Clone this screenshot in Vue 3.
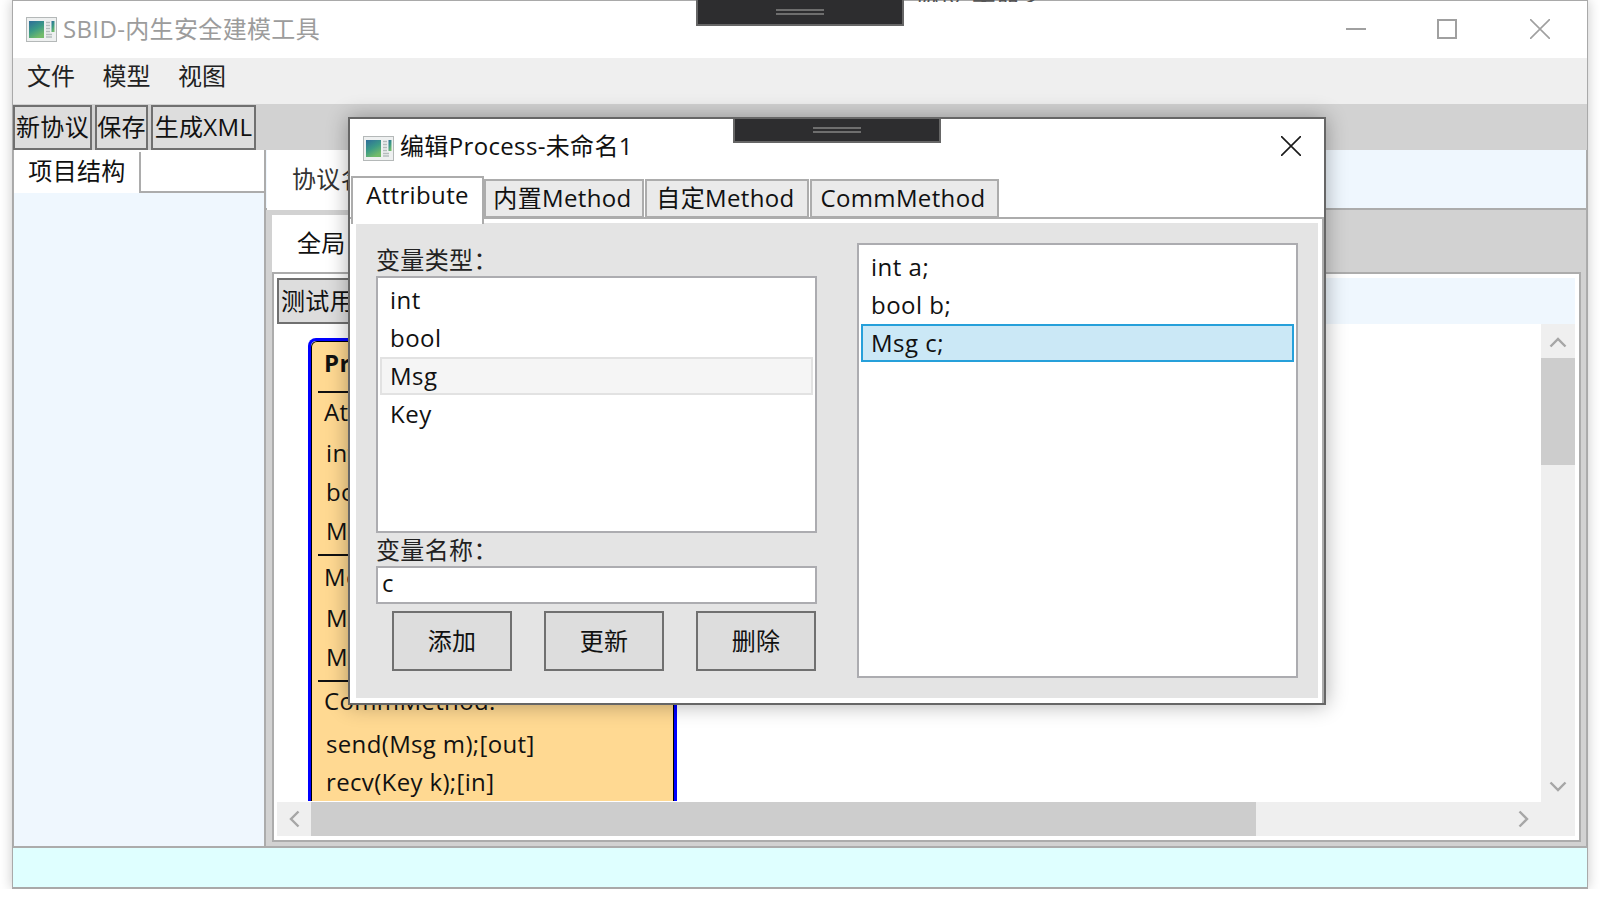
<script setup>
const menus = ['文件', '模型', '视图']
const tools = ['新协议', '保存', '生成XML']
const types = ['int', 'bool', 'Msg', 'Key']
const vars = ['int a;', 'bool b;', 'Msg c;']
const dialogTabs = ['内置Method', '自定Method', 'CommMethod']
const actions = ['添加', '更新', '删除']
const nodeSections = [
  { title: 'Attribute:', rows: ['int a;', 'bool b;', 'Msg c;'] },
  { title: 'Method:', rows: ['Method1', 'Method2'] },
]
</script>

<template>
  <div class="window">
    <header class="titlebar">
      <svg class="appicon" viewBox="0 0 31 25">
        <defs>
          <linearGradient id="appgrad" x1="0" y1="0" x2="0.5" y2="1">
            <stop offset="0" stop-color="#2d6c9a" />
            <stop offset="0.55" stop-color="#3b9a86" />
            <stop offset="1" stop-color="#72bb6a" />
          </linearGradient>
        </defs>
        <rect x="0.5" y="0.5" width="30" height="24" fill="#eef0f0" stroke="#b4b8b8" />
        <rect x="3" y="4" width="15" height="17" fill="url(#appgrad)" />
        <path d="M20 5.5h4M20 8.5h4M20 11.5h4M20 14.5h4M20 17.5h6M20 20h6" stroke="#b4bcbc" stroke-width="1.3" />
        <rect x="25.5" y="4" width="3" height="11" fill="url(#appgrad)" />
      </svg>
      <span class="apptitle">SBID-内生安全建模工具</span>
      <div class="winbtns">
        <svg width="20" height="20" viewBox="0 0 20 20"><path d="M0 10h20" stroke="#a0a0a0" stroke-width="2" /></svg>
        <svg width="20" height="20" viewBox="0 0 20 20"><rect x="1" y="1" width="18" height="18" fill="none" stroke="#a0a0a0" stroke-width="2" /></svg>
        <svg width="20" height="20" viewBox="0 0 20 20"><path d="M0 0l20 20M20 0L0 20" stroke="#a0a0a0" stroke-width="1.6" /></svg>
      </div>
    </header>

    <nav class="menubar">
      <span v-for="m in menus" :key="m" class="menuitem">{{ m }}</span>
    </nav>

    <div class="toolbar">
      <button v-for="t in tools" :key="t" class="toolbtn">{{ t }}</button>
    </div>

    <div class="workspace">
      <aside class="leftpanel">
        <div class="lefttabs">
          <div class="lefttab">项目结构</div>
        </div>
        <div class="leftbody"></div>
      </aside>

      <section class="rightpanel">
        <div class="protostrip">
          <div class="prototab">协议名</div>
        </div>
        <div class="protobody">
          <div class="globaltabs">
            <div class="globaltab">全局</div>
          </div>
          <div class="canvaspane">
            <div class="canvastools">
              <button class="testbtn">测试用例</button>
            </div>
            <div class="canvasrow">
              <div class="canvas">
                <div class="node">
                  <div class="nodeinner">
                    <div class="nodehead">Process</div>
                    <div v-for="s in nodeSections" :key="s.title" class="nodesec">
                      <div class="nodetitle">{{ s.title }}</div>
                      <div v-for="r in s.rows" :key="r" class="noderow">{{ r }}</div>
                    </div>
                    <div class="nodetitle commtitle">CommMethod:</div>
                    <div class="commrow">send(Msg m);[out]</div>
                    <div class="commrow">recv(Key k);[in]</div>
                  </div>
                </div>
              </div>
              <div class="vscroll">
                <svg class="arrow arrowup" width="18" height="12" viewBox="0 0 18 12"><path d="M1.5 10.5L9 3l7.5 7.5" fill="none" stroke="#a6a6a6" stroke-width="2.4" /></svg>
                <div class="vthumb"></div>
                <div class="vtrack"></div>
                <svg class="arrow arrowdown" width="18" height="12" viewBox="0 0 18 12"><path d="M1.5 1.5L9 9l7.5-7.5" fill="none" stroke="#a6a6a6" stroke-width="2.4" /></svg>
              </div>
            </div>
            <div class="hscroll">
              <div class="hbtn">
                <svg width="12" height="18" viewBox="0 0 12 18"><path d="M10.5 1.5L3 9l7.5 7.5" fill="none" stroke="#a6a6a6" stroke-width="2.4" /></svg>
              </div>
              <div class="hthumb"></div>
              <div class="htrack"></div>
              <div class="hbtn">
                <svg width="12" height="18" viewBox="0 0 12 18"><path d="M1.5 1.5L9 9l-7.5 7.5" fill="none" stroke="#a6a6a6" stroke-width="2.4" /></svg>
              </div>
              <div class="hcorner"></div>
            </div>
          </div>
        </div>
      </section>
    </div>

    <footer class="statusbar"></footer>
  </div>

  <div class="handle tophandle"><i></i><i></i></div>
  <div class="peektext">协议-未命名</div>

  <div class="dialog">
    <div class="handle dlghandle"><i></i><i></i></div>
    <header class="dlgtitle">
      <svg class="appicon dlgicon" viewBox="0 0 31 25">
        <rect x="0.5" y="0.5" width="30" height="24" fill="#eef0f0" stroke="#b4b8b8" />
        <rect x="3" y="4" width="15" height="17" fill="url(#appgrad)" />
        <path d="M20 5.5h4M20 8.5h4M20 11.5h4M20 14.5h4M20 17.5h6M20 20h6" stroke="#b4bcbc" stroke-width="1.3" />
        <rect x="25.5" y="4" width="3" height="11" fill="url(#appgrad)" />
      </svg>
      <span class="dlgname">编辑Process-未命名1</span>
      <svg class="dlgclose" width="20" height="20" viewBox="0 0 20 20"><path d="M0 0l20 20M20 0L0 20" stroke="#1a1a1a" stroke-width="1.6" /></svg>
    </header>
    <div class="dlgtabs">
      <div class="dlgtab active">Attribute</div>
      <div v-for="t in dialogTabs" :key="t" class="dlgtab">{{ t }}</div>
    </div>
    <div class="dlgpane">
      <div class="dlgcontent">
        <div class="formcol">
          <label class="flabel firstlabel">变量类型：</label>
          <ul class="typelist">
            <li v-for="t in types" :key="t" class="row" :class="{ hover: t === 'Msg' }">{{ t }}</li>
          </ul>
          <label class="flabel">变量名称：</label>
          <div class="input">c</div>
          <div class="actions">
            <button v-for="a in actions" :key="a" class="actionbtn">{{ a }}</button>
          </div>
        </div>
        <ul class="varlist">
          <li v-for="v in vars" :key="v" class="row" :class="{ selected: v === 'Msg c;' }">{{ v }}</li>
        </ul>
      </div>
    </div>
  </div>
</template>

<style>
html, body { margin: 0; background: #fff; overflow: hidden; }
</style>

<style scoped>
.window, .dialog, .peektext {
  font-family: "Open Sans", "Noto Sans CJK SC", sans-serif;
  font-size: 24px;
  letter-spacing: 0.35px;
  color: #111;
}
.window {
  box-sizing: border-box;
  position: relative;
  margin-left: 12px;
  width: 1576px;
  height: 889px;
  border: 1px solid #a9a9a9;
  border-bottom-width: 2px;
  background: #fff;
  box-shadow: 0 0 12px rgba(0, 0, 0, 0.22);
  display: flex;
  flex-direction: column;
}
.titlebar {
  height: 57px;
  flex: none;
  display: flex;
  align-items: center;
  padding-left: 13px;
  background: #fff;
  position: relative;
}
.appicon { width: 31px; height: 25px; flex: none; margin-top: -1px; }
.apptitle { margin-left: 6px; color: #9c9c9c; line-height: 1; margin-top: -1px; }
.winbtns {
  position: absolute;
  left: 1333px;
  top: 18px;
  display: flex;
  gap: 71px;
}
.winbtns svg:nth-child(2) { margin-right: 2px; }
.menubar {
  box-sizing: border-box;
  height: 46px;
  flex: none;
  background: #efefef;
  display: flex;
  align-items: center;
  padding: 0 0 10px 14px;
  gap: 27.5px;
  letter-spacing: 0;
}
.menuitem { line-height: 1; color: #222; }
.toolbar {
  height: 46px;
  flex: none;
  background: #d2d2d2;
  display: flex;
  gap: 3px;
  padding-top: 1px;
  box-sizing: border-box;
}
.toolbtn, .testbtn {
  box-sizing: border-box;
  height: 45px;
  padding: 0 0 4px;
  margin: 0;
  border: 2px solid #707070;
  background: #ddd;
  font: inherit;
  letter-spacing: inherit;
  color: #111;
  white-space: nowrap;
}
.toolbtn { width: 79px; }
.toolbtn:nth-child(2) { width: 53px; }
.toolbtn:nth-child(3) { width: 105px; }
.testbtn { height: 46px; padding: 0 2px 4px; }
.workspace {
  flex: 1;
  display: flex;
  min-height: 0;
  background: #acacac;
  padding: 0 1px 2px;
}
.leftpanel {
  box-sizing: border-box;
  width: 252px;
  flex: none;
  display: flex;
  flex-direction: column;
  border-right: 2px solid #acacac;
}
.lefttabs {
  height: 43px;
  flex: none;
  background: #fff;
  box-sizing: border-box;
  border-bottom: 2px solid #acacac;
  padding-top: 2px;
}
.lefttab {
  box-sizing: content-box;
  width: 124px;
  height: 41px;
  padding-left: 1px;
  background: #fff;
  border-right: 2px solid #acacac;
  text-align: center;
  line-height: 38px;
}
.leftbody { flex: 1; background: #eff7fe; }
.rightpanel {
  flex: 1;
  min-width: 0;
  display: flex;
  flex-direction: column;
  background: #d2d2d2;
}
.protostrip {
  height: 58px;
  flex: none;
  background: #eff7fe;
  border-bottom: 2px solid #acacac;
  position: relative;
}
.prototab {
  width: 200px;
  height: 60px;
  background: #fff;
  margin-left: 1px;
  padding-left: 25px;
  line-height: 58px;
  box-sizing: border-box;
  color: #333;
}
.protobody {
  flex: 1;
  min-height: 0;
  display: flex;
  flex-direction: column;
  padding: 5px 5px 4px 6px;
}
.globaltabs { height: 57px; flex: none; }
.globaltab {
  width: 200px;
  height: 60px;
  background: #fff;
  padding-left: 25px;
  line-height: 56px;
  box-sizing: border-box;
}
.canvaspane {
  flex: 1;
  min-height: 0;
  box-sizing: border-box;
  border: 2px solid #acacac;
  background: #fff;
  padding: 4px 4px 4px 3px;
  display: flex;
  flex-direction: column;
  position: relative;
}
.canvastools {
  height: 46px;
  flex: none;
  background: #eff7fe;
  display: flex;
}
.canvasrow { flex: 1; min-height: 0; display: flex; }
.canvas { flex: 1; min-width: 0; overflow: hidden; background: #fff; position: relative; }
.node {
  box-sizing: border-box;
  margin: 14px 0 0 31px;
  width: 369px;
  border: 3px solid #0000ff;
  border-radius: 8px 8px 0 0;
  border-bottom: 0;
}
.nodeinner {
  box-sizing: border-box;
  border: 1px solid #000;
  border-bottom: 0;
  border-radius: 6px 6px 0 0;
  background: #ffd992;
  padding: 2px 0 0 6px;
  line-height: 38px;
}
.nodehead { font-weight: 700; height: 38px; padding-left: 6px; margin-bottom: 9px; }
.nodesec { border-top: 2px solid #111; padding-bottom: 3px; }
.nodetitle { height: 38px; margin-bottom: 3px; padding-left: 6px; }
.nodesec + .nodesec .nodetitle { margin-top: 2px; }
.noderow { height: 39px; padding-left: 8px; }
.commtitle { border-top: 2px solid #111; height: 40px; margin-bottom: 3px; }
.commrow { height: 38px; padding-left: 8px; }
.vscroll {
  width: 34px;
  flex: none;
  background: #efefef;
  display: flex;
  flex-direction: column;
  align-items: center;
}
.arrow { flex: none; }
.arrowup { margin: 12px 0 10px; }
.arrowdown { margin: 13px 0 9px; }
.vthumb { width: 100%; height: 107px; background: #cdcdcd; flex: none; }
.vtrack { flex: 1; }
.hscroll {
  height: 34px;
  flex: none;
  display: flex;
  background: #efefef;
}
.hbtn {
  width: 34px;
  flex: none;
  display: flex;
  align-items: center;
  justify-content: center;
}
.hthumb { width: 945px; flex: none; background: #cdcdcd; }
.htrack { flex: 1; }
.hcorner { width: 34px; flex: none; }
.statusbar {
  height: 39px;
  flex: none;
  background: #dfffff;
}

.handle {
  position: absolute;
  box-sizing: border-box;
  width: 208px;
  border: 2px solid #666;
  border-top: 0;
  background: #2d2d2f;
  display: flex;
  flex-direction: column;
  align-items: center;
  justify-content: center;
  gap: 2px;
  z-index: 3;
}
.handle i {
  display: block;
  width: 48px;
  height: 2px;
  background: #6e6e6e;
}
.tophandle { left: 696px; top: 0; height: 26px; }
.dlghandle { left: 383px; top: 0; height: 24px; }
.peektext {
  position: absolute;
  left: 915px;
  top: 0;
  height: 2px;
  overflow: hidden;
  color: #555;
  line-height: 2px;
  white-space: nowrap;
}

.dialog {
  position: absolute;
  box-sizing: border-box;
  left: 348px;
  top: 117px;
  width: 978px;
  height: 588px;
  border: 2px solid #666;
  background: #fff;
  box-shadow: 0 0 20px rgba(0, 0, 0, 0.32);
  z-index: 2;
  display: flex;
  flex-direction: column;
}
.dlgtitle {
  height: 58px;
  flex: none;
  display: flex;
  align-items: center;
  padding-left: 13px;
  position: relative;
}
.dlgicon { margin-top: 0; }
.dlgname { margin-left: 6px; line-height: 1; margin-top: -4px; }
.dlgclose { position: absolute; left: 931px; top: 17px; }
.dlgtabs {
  height: 42px;
  flex: none;
  display: flex;
  align-items: flex-end;
  gap: 1px;
  padding-left: 1px;
  position: relative;
  z-index: 1;
}
.dlgtab {
  box-sizing: border-box;
  height: 39px;
  border: 2px solid #acacac;
  background: #eaeaea;
  line-height: 34px;
  text-align: center;
  margin-bottom: 1px;
  padding-right: 3px;
  width: 160px;
}
.dlgtab:nth-child(3) { width: 164px; }
.dlgtab:last-child { width: 189px; }
.dlgtab.active {
  width: 133px;
  height: 48px;
  padding-right: 0;
  background: #fff;
  border-bottom: 0;
  border-right: 2px solid #acacac;
  line-height: 34px;
  margin-bottom: -5px;
  margin-right: -1px;
  position: relative;
  z-index: 1;
}
.dlgpane {
  flex: 1;
  min-height: 0;
  box-sizing: border-box;
  border-top: 2px solid #acacac;
  border-right: 2px solid #acacac;
  padding: 4px 4px 5px 6px;
  background: #fff;
  margin-top: -2px;
}
.dlgcontent {
  height: 100%;
  box-sizing: border-box;
  background: #e4e4e4;
  padding: 20px 20px 20px;
  display: flex;
  justify-content: space-between;
  align-items: stretch;
}
.formcol { width: 441px; flex: none; display: flex; flex-direction: column; }
.flabel { display: block; height: 33px; line-height: 34px; color: #222; flex: none; }
.firstlabel { height: 33px; line-height: 34px; }
ul { list-style: none; margin: 0; }
.typelist {
  box-sizing: border-box;
  height: 257px;
  flex: none;
  border: 2px solid #acacb0;
  background: #fff;
  padding: 3px 2px 2px;
}
.varlist {
  box-sizing: border-box;
  width: 441px;
  flex: none;
  border: 2px solid #acacb0;
  background: #fff;
  padding: 3px 2px;
}
.row {
  box-sizing: border-box;
  height: 38px;
  line-height: 34px;
  padding-left: 8px;
  border: 2px solid transparent;
  letter-spacing: 0.5px;
}
.row.hover { background: #f5f5f5; border-color: #e2e2e2; }
.row.selected { background: #cbe8f6; border-color: #26a0da; }
.input {
  box-sizing: border-box;
  height: 38px;
  flex: none;
  border: 2px solid #acacb0;
  background: #fff;
  padding-left: 4px;
  line-height: 30px;
}
.actions {
  display: flex;
  gap: 32px;
  margin: 7px 0 0 16px;
}
.actionbtn {
  box-sizing: border-box;
  width: 120px;
  height: 60px;
  margin: 0;
  padding: 0 0 4px;
  border: 2px solid #707070;
  background: #ddd;
  font: inherit;
  letter-spacing: inherit;
  color: #111;
}
</style>
